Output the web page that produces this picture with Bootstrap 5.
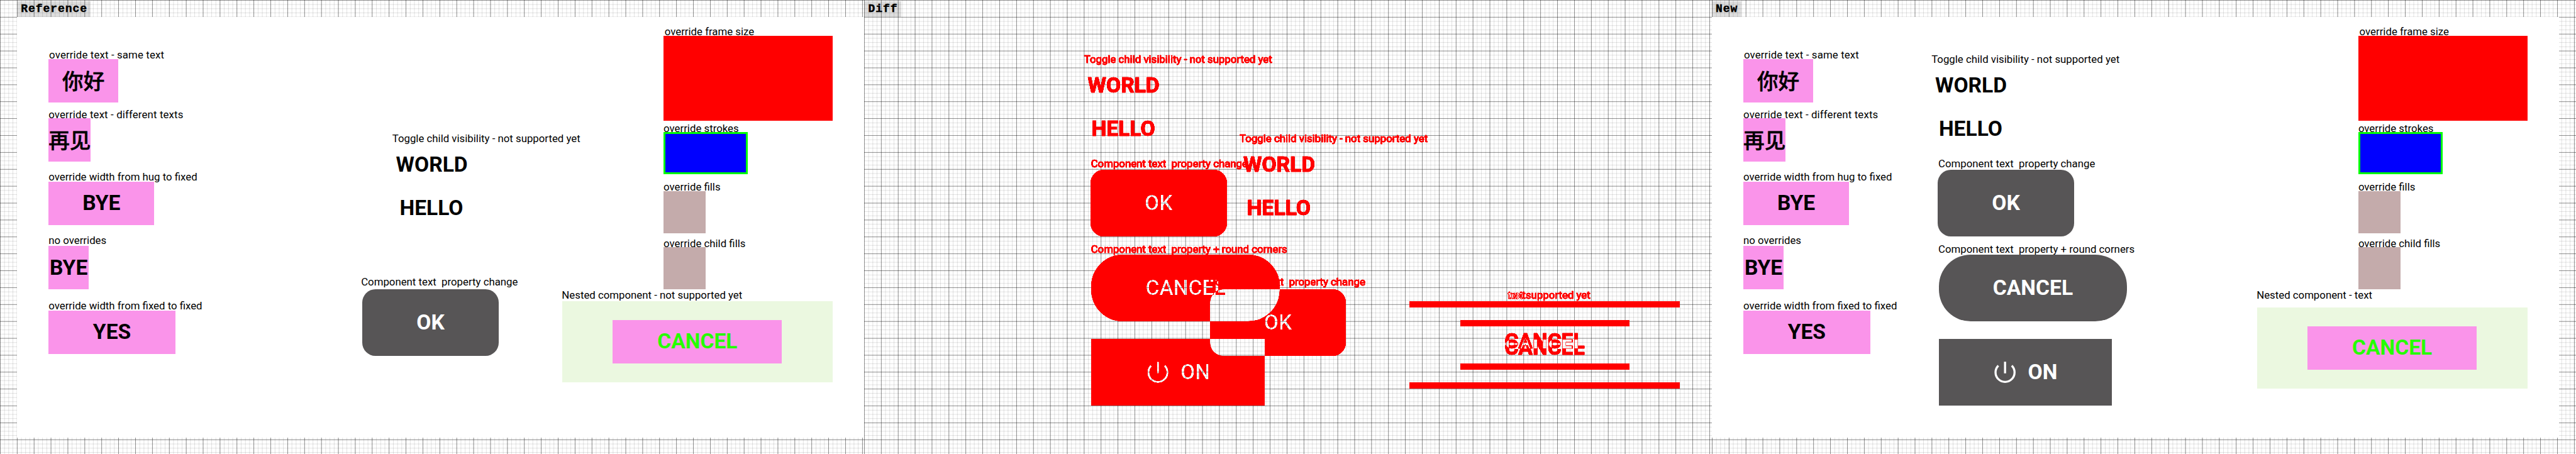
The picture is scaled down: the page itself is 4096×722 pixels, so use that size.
<!DOCTYPE html>
<html lang="en">
<head>
<meta charset="utf-8">
<meta name="viewport" content="width=device-width, initial-scale=1">
<title>Reference / Diff / New</title>
<link href="https://cdn.jsdelivr.net/npm/bootstrap@5.3.0/dist/css/bootstrap.min.css" rel="stylesheet">
<style>
  html, body { overflow: hidden; }
  body { font-family: Roboto, "Noto Sans CJK SC", sans-serif; color: #000; background: #fff; }
  .stage { width: 4876px; height: 859.5px; zoom: .84003; }

  /* graph paper: 8px minor lines, 32px major lines */
  .paper {
    background-color: #fff;
    background-image:
      repeating-linear-gradient(90deg, rgba(0,0,0,0) -.6px, rgba(0,0,0,.37) .4px, rgba(0,0,0,.37) .6px, rgba(0,0,0,0) 1.6px, rgba(0,0,0,0) 31.4px),
      repeating-linear-gradient(180deg, rgba(0,0,0,0) -.6px, rgba(0,0,0,.37) .4px, rgba(0,0,0,.37) .6px, rgba(0,0,0,0) 1.6px, rgba(0,0,0,0) 31.4px),
      repeating-linear-gradient(90deg, rgba(0,0,0,0) -.6px, rgba(0,0,0,.11) .4px, rgba(0,0,0,.11) .6px, rgba(0,0,0,0) 1.6px, rgba(0,0,0,0) 7.4px),
      repeating-linear-gradient(180deg, rgba(0,0,0,0) -.6px, rgba(0,0,0,.11) .4px, rgba(0,0,0,.11) .6px, rgba(0,0,0,0) 1.6px, rgba(0,0,0,0) 7.4px);
  }
  .pane-side { width: 1636px; }
  .pane-mid { width: 1604px; }
  .pane-first { padding-left: 32px; }
  .pane-head { height: 32px; }
  .pane-tag {
    height: 30px; margin-top: 2px; padding: 0 6.5px 0 7.5px; background: rgba(0,0,0,.135);
    font: 700 21.4px/30px "Courier New", "Liberation Mono", monospace; letter-spacing: 1.16px;
    -webkit-text-stroke: .6px #000;
  }
  .artboard { width: 1604px; height: 796px; }

  /* canvas nodes */
  .node { position: absolute; }
  .cap { font-size: 20px; line-height: 24px; white-space: pre; }
  .wide { letter-spacing: .17px; }
  .big { font-size: 40px; line-height: 48px; font-weight: 700; white-space: pre; }
  .zh { font-family: "Noto Sans CJK SC", sans-serif; font-weight: 500; -webkit-text-stroke: .6px #000; }
  .pink { background: #fa94ea; height: 82px; }
  .btn-dark-node { background: #575556; color: #fff; height: 126px; }

  .l1 { left: 61px; top: 59.4px; }  .b1 { left: 60px; top: 80px; width: 132px; }
  .l2 { left: 60px; top: 172.6px; } .b2 { left: 60px; top: 192px; width: 80px; }
  .l3 { left: 60px; top: 291px; }   .b3 { left: 60px; top: 312px; width: 200px; }
  .l4 { left: 60px; top: 411px; }   .b4 { left: 60px; top: 434px; width: 76px; }
  .l5 { left: 60px; top: 535px; }   .b5 { left: 60px; top: 556px; width: 240px; }

  .r1 { left: 1226px; top: 15.3px; }  .s1 { left: 1224px; top: 36px; width: 320px; height: 160px; background: #f00; }
  .r2 { left: 1224px; top: 199.3px; } .s2 { left: 1224px; top: 218px; width: 160px; height: 80px; background: #00f; border: 4px solid #0f0; }
  .r3 { left: 1224px; top: 309.3px; } .s3 { left: 1224px; top: 330px; width: 80px; height: 80px; background: #c4abab; }
  .r4 { left: 1224px; top: 417px; } .s4 { left: 1224px; top: 436px; width: 80px; height: 80px; background: #c4abab; }
  .n1 { left: 1031.5px; top: 514.8px; }
  .nest { left: 1032px; top: 538px; width: 512px; height: 154px; background: #ebf8e0; color: #26ff00; }
  .nest .pink { width: 320px; }
  .nest-low { top: 550px; }

  .toggle-set { left: 710.5px; top: 218.5px; }
  .toggle-set-new { left: 416px; top: 68.5px; }
  .toggle-set .big:nth-child(2), .toggle-set-new .big:nth-child(2) { margin: 14px 0 33.5px 7px; }
  .toggle-set .big:nth-child(3), .toggle-set-new .big:nth-child(3) { margin-left: 14px; }
  .ok-cap { left: 651.5px; top: 489.5px; }
  .ok-btn { left: 654px; top: 516px; width: 258px; border-radius: 25px; }
  .ok-cap-new { left: 429px; top: 265.3px; }
  .ok-btn-new { left: 428px; top: 290px; width: 258px; border-radius: 25px; }
  .cancel-cap { left: 429px; top: 427.3px; }
  .cancel-btn { left: 430px; top: 450px; width: 356px; border-radius: 60px; }
  .on-btn { left: 430px; top: 610px; width: 328px; }
  .on-btn svg { width: 48px; height: 48px; margin-left: -2px; }
  .on-btn .big { margin-left: 19px; }

  .xor { background: #000; filter: url(#keep-red); color: #f00; }
  .xor .node { mix-blend-mode: difference; }
  .xor .node.cap:not(.x-not) { mix-blend-mode: normal; }
  .xor .cap, .xor .toggle-set .big, .xor .toggle-set-new .big, .xor .x-word { -webkit-text-stroke: .8px #f00; }
  .xor .node.btn-dark-node, .xor .block { background: #f00; color: #f00; }
  .xor .node.btn-dark-node > * { mix-blend-mode: difference; }
  .xor .btn-dark-node .big { font-weight: 500; }
  .xor .bar-tall { left: 1032px; top: 538px; width: 512px; height: 154px; }
  .xor .bar-tall.low { top: 550px; }
  .xor .bar-in { left: 1128px; top: 574px; width: 320px; height: 82px; }
  .xor .bar-in.low { top: 586px; }
  .x-not { left: 1218px; top: 514.8px; }
  .x-word { left: 1212px; top: 591px; }
  .x-word.low { top: 603px; }
</style>
</head>
<body>
<svg class="position-absolute" width="0" height="0" aria-hidden="true">
  <filter id="keep-red" color-interpolation-filters="sRGB" x="0" y="0" width="100%" height="100%">
    <feColorMatrix values="0 0 0 0 1  0 0 0 0 0  0 0 0 0 0  2.6 0 0 0 -.1"/>
  </filter>
</svg>

<main class="stage d-flex overflow-hidden">

  <section class="pane-side pane-first paper flex-shrink-0">
    <header class="pane-head d-flex"><div class="pane-tag">Reference</div></header>
    <div class="artboard bg-white position-relative">
      <div class="node pink b1 d-flex align-items-center justify-content-center big zh">你好</div>
      <div class="node cap wide l1">override text - same text</div>
      <div class="node cap wide l2">override text - different texts</div>
      <div class="node pink b2 d-flex align-items-center justify-content-center big zh">再见</div>
      <div class="node pink b3 d-flex align-items-center justify-content-center big">BYE</div>
      <div class="node cap l3">override width from hug to fixed</div>
      <div class="node cap l4">no overrides</div>
      <div class="node pink b4 d-flex align-items-center justify-content-center big">BYE</div>
      <div class="node cap l5">override width from fixed to fixed</div>
      <div class="node pink b5 d-flex align-items-center justify-content-center big">YES</div>

      <div class="node toggle-set">
        <div class="cap">Toggle child visibility - not supported yet</div>
        <div class="big">WORLD</div>
        <div class="big">HELLO</div>
      </div>
      <div class="node cap ok-cap">Component text  property change</div>
      <div class="node btn-dark-node ok-btn d-flex align-items-center justify-content-center"><span class="big">OK</span></div>

      <div class="node cap r1">override frame size</div>
      <div class="node s1"></div>
      <div class="node cap r2">override strokes</div>
      <div class="node s2"></div>
      <div class="node cap r3">override fills</div>
      <div class="node s3"></div>
      <div class="node cap r4">override child fills</div>
      <div class="node s4"></div>
      <div class="node cap n1">Nested component - not supported yet</div>
      <div class="node nest d-flex align-items-center justify-content-center">
        <div class="pink d-flex align-items-center justify-content-center big">CANCEL</div>
      </div>
    </div>
  </section>

  <section class="pane-mid paper flex-shrink-0">
    <header class="pane-head d-flex"><div class="pane-tag">Diff</div></header>
    <div class="artboard xor position-relative">
      <div class="node toggle-set-new">
        <div class="cap">Toggle child visibility - not supported yet</div>
        <div class="big">WORLD</div>
        <div class="big">HELLO</div>
      </div>
      <div class="node toggle-set">
        <div class="cap">Toggle child visibility - not supported yet</div>
        <div class="big">WORLD</div>
        <div class="big">HELLO</div>
      </div>
      <div class="node cap ok-cap-new">Component text  property change</div>
      <div class="node btn-dark-node ok-btn-new d-flex align-items-center justify-content-center"><span class="big">OK</span></div>
      <div class="node cap cancel-cap">Component text  property + round corners</div>
      <div class="node btn-dark-node cancel-btn d-flex align-items-center justify-content-center"><span class="big">CANCEL</span></div>
      <div class="node cap ok-cap">Component text  property change</div>
      <div class="node btn-dark-node ok-btn d-flex align-items-center justify-content-center"><span class="big">OK</span></div>
      <div class="node btn-dark-node on-btn d-flex align-items-center justify-content-center">
        <svg viewBox="-24 -24 48 48" fill="none" stroke="#f00" stroke-width="4"><path d="M-12.7-12.7A18 18 0 1 0 12.7-12.7M0-20V2"/></svg>
        <span class="big">ON</span>
      </div>

      <div class="node block bar-tall"></div>
      <div class="node block bar-tall low"></div>
      <div class="node block bar-in"></div>
      <div class="node block bar-in low"></div>
      <div class="node cap x-not">not supported yet</div>
      <div class="node cap x-not">text</div>
      <div class="node big x-word">CANCEL</div>
      <div class="node big x-word low">CANCEL</div>
    </div>
  </section>

  <section class="pane-side paper flex-shrink-0">
    <header class="pane-head d-flex"><div class="pane-tag">New</div></header>
    <div class="artboard bg-white position-relative">
      <div class="node pink b1 d-flex align-items-center justify-content-center big zh">你好</div>
      <div class="node cap wide l1">override text - same text</div>
      <div class="node cap wide l2">override text - different texts</div>
      <div class="node pink b2 d-flex align-items-center justify-content-center big zh">再见</div>
      <div class="node pink b3 d-flex align-items-center justify-content-center big">BYE</div>
      <div class="node cap l3">override width from hug to fixed</div>
      <div class="node cap l4">no overrides</div>
      <div class="node pink b4 d-flex align-items-center justify-content-center big">BYE</div>
      <div class="node cap l5">override width from fixed to fixed</div>
      <div class="node pink b5 d-flex align-items-center justify-content-center big">YES</div>

      <div class="node toggle-set-new">
        <div class="cap">Toggle child visibility - not supported yet</div>
        <div class="big">WORLD</div>
        <div class="big">HELLO</div>
      </div>
      <div class="node cap ok-cap-new">Component text  property change</div>
      <div class="node btn-dark-node ok-btn-new d-flex align-items-center justify-content-center"><span class="big">OK</span></div>
      <div class="node cap cancel-cap">Component text  property + round corners</div>
      <div class="node btn-dark-node cancel-btn d-flex align-items-center justify-content-center"><span class="big">CANCEL</span></div>
      <div class="node btn-dark-node on-btn d-flex align-items-center justify-content-center">
        <svg viewBox="-24 -24 48 48" fill="none" stroke="#fff" stroke-width="4"><path d="M-12.7-12.7A18 18 0 1 0 12.7-12.7M0-20V2"/></svg>
        <span class="big">ON</span>
      </div>

      <div class="node cap r1">override frame size</div>
      <div class="node s1"></div>
      <div class="node cap r2">override strokes</div>
      <div class="node s2"></div>
      <div class="node cap r3">override fills</div>
      <div class="node s3"></div>
      <div class="node cap r4">override child fills</div>
      <div class="node s4"></div>
      <div class="node cap n1">Nested component - text</div>
      <div class="node nest nest-low d-flex align-items-center justify-content-center">
        <div class="pink d-flex align-items-center justify-content-center big">CANCEL</div>
      </div>
    </div>
  </section>

</main>
<script src="https://cdn.jsdelivr.net/npm/bootstrap@5.3.0/dist/js/bootstrap.bundle.min.js"></script>
</body>
</html>
